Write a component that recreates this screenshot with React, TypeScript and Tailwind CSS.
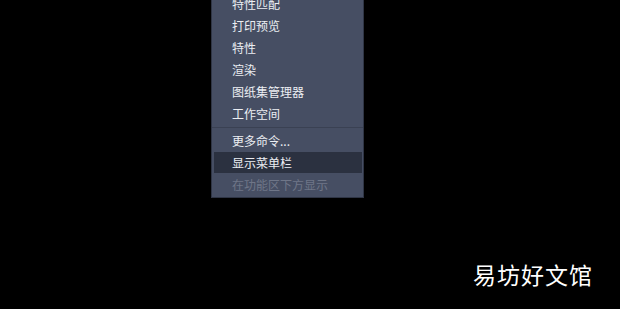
const items = ["特性匹配", "打印预览", "特性", "渲染", "图纸集管理器", "工作空间"]

export default function App() {
  return (
    <div
      className="w-[620px] h-[309px] bg-black overflow-hidden flex flex-col"
      style={{ fontFamily: '"Noto Sans CJK SC", "Liberation Sans", sans-serif' }}
    >
      <div className="ml-[211px] -mt-[7px] w-[153px] bg-[#464e63] border border-[#2f3545] border-t-0 pb-[1px] shrink-0">
        {items.map((t) => (
          <div key={t} className="h-[22px] pl-[20px] flex items-center text-[12px] text-[#eceef3]">
            {t}
          </div>
        ))}
        <div className="h-[5px] flex items-center">
          <div className="h-px w-full bg-[#3a4153]" />
        </div>
        <div className="h-[22px] pl-[20px] flex items-center text-[12px] text-[#eceef3]">更多命令...</div>
        <div className="ml-[2px] mr-px h-[21px] pl-[18px] flex items-center text-[12px] text-[#eceef3] bg-[#2b3140]">
          显示菜单栏
        </div>
        <div className="h-[23px] pl-[20px] flex items-center text-[12px] text-[#6f7688]">在功能区下方显示</div>
      </div>
      <div className="flex-1 flex items-end justify-end pr-[27px] pb-[23px]">
        <span className="text-[23px] leading-none text-white tracking-[1px]">易坊好文馆</span>
      </div>
    </div>
  )
}
